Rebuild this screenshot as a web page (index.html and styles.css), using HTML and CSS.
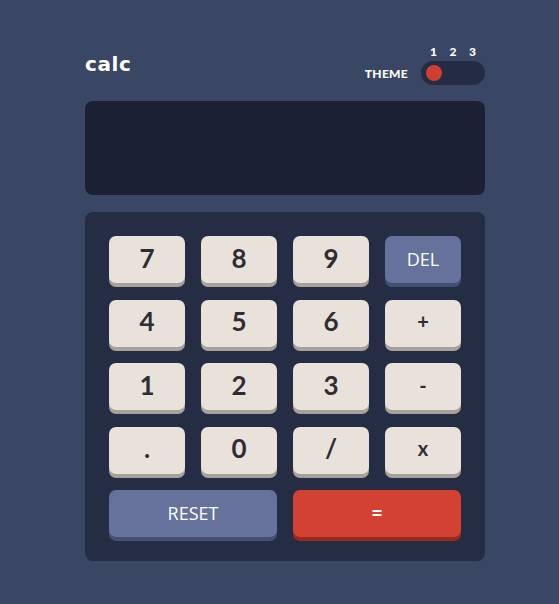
FILE: index.html
```html
<!DOCTYPE html>
<html lang="en">
<head>
<meta charset="utf-8">
<title>calc</title>
<link rel="stylesheet" href="styles.css">
</head>
<body>
<main class="calc">
  <header class="top">
    <h1 class="logo">calc</h1>
    <div class="theme">
      <span class="theme-label">THEME</span>
      <div class="switch-wrap">
        <div class="nums"><span>1</span><span>2</span><span>3</span></div>
        <div class="switch"><span class="knob"></span></div>
      </div>
    </div>
  </header>
  <section class="screen"></section>
  <section class="keypad">
    <button class="key">7</button>
    <button class="key">8</button>
    <button class="key">9</button>
    <button class="key key-blue">DEL</button>
    <button class="key">4</button>
    <button class="key">5</button>
    <button class="key">6</button>
    <button class="key key-op">+</button>
    <button class="key">1</button>
    <button class="key">2</button>
    <button class="key">3</button>
    <button class="key key-op">-</button>
    <button class="key">.</button>
    <button class="key">0</button>
    <button class="key">/</button>
    <button class="key key-op">x</button>
    <button class="key key-blue key-wide">RESET</button>
    <button class="key key-red key-wide">=</button>
  </section>
</main>
</body>
</html>
```
FILE: styles.css
```css
* { box-sizing: border-box; }
html, body { margin: 0; padding: 0; }
body {
  background: #3a4764;
  font-family: "Lato", "DejaVu Sans", sans-serif;
  color: #ffffff;
  min-height: 604px;
}
.calc {
  width: 400px;
  margin-left: 85px;
  padding-top: 45px;
}
.top {
  display: flex;
  justify-content: space-between;
  align-items: flex-end;
  margin-bottom: 16px;
}
.logo {
  margin: 0 0 9px 0;
  font-family: "DejaVu Sans", sans-serif;
  font-size: 20px;
  line-height: 24px;
  font-weight: 700;
  letter-spacing: 0.6px;
}
.theme {
  display: flex;
  align-items: flex-end;
  gap: 13px;
}
.theme-label {
  font-size: 12px;
  font-weight: 900;
  line-height: 12px;
  margin-bottom: 5px;
  letter-spacing: 0.3px;
}
.switch-wrap {
  width: 64px;
  display: flex;
  flex-direction: column;
  gap: 3px;
}
.nums {
  display: flex;
  justify-content: space-between;
  padding: 0 9px 0 9px;
  font-size: 12px;
  font-weight: 900;
  line-height: 13px;
}
.switch {
  height: 24px;
  border-radius: 12px;
  background: #232c43;
  padding: 4px 5px;
  display: flex;
}
.knob {
  width: 16px;
  height: 16px;
  border-radius: 50%;
  background: #d03f2f;
}
.screen {
  height: 94px;
  border-radius: 8px;
  background: #1b2034;
  margin-bottom: 17px;
}
.keypad {
  background: #252d44;
  border-radius: 8px;
  padding: 24px;
  display: grid;
  grid-template-columns: repeat(4, 76px);
  grid-auto-rows: 47px;
  column-gap: 16px;
  row-gap: 16.5px;
}
.key {
  border: 0;
  margin: 0;
  border-radius: 7px;
  background: #e8e2db;
  box-shadow: 0 4px 0 #a8a199;
  color: #2f2d33;
  font-family: "Lato", "DejaVu Sans", sans-serif;
  font-weight: 700;
  font-size: 26px;
  line-height: 1;
  padding: 0 0 4px 0;
  display: flex;
  align-items: center;
  justify-content: center;
}
.key-op { font-size: 20px; }
.key-blue {
  background: #66729c;
  box-shadow: 0 4px 0 #444f71;
  color: #ffffff;
  font-family: "Open Sans", "Noto Sans", sans-serif;
  font-weight: 400;
  font-size: 18px;
  padding-bottom: 2px;
}
.key-red {
  background: #d24132;
  box-shadow: 0 4px 0 #972a1f;
  color: #ffffff;
  font-size: 20px;
}
.key-wide { grid-column: span 2; }
```
